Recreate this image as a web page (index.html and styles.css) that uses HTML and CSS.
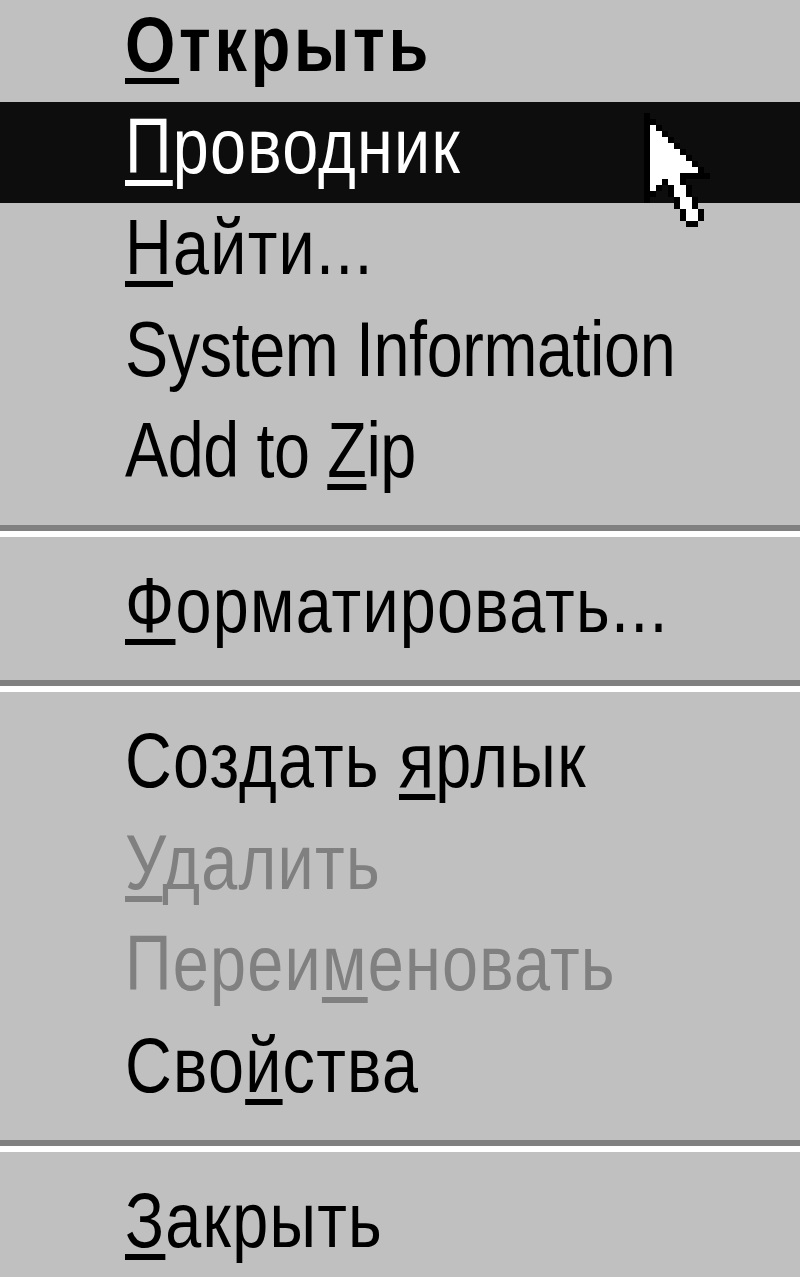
FILE: index.html
```html
<!DOCTYPE html>
<html lang="ru">
<head>
  <meta charset="UTF-8" />
  <meta name="viewport" content="width=device-width, initial-scale=1.0"/>
  <title>Контекстное меню</title>
<link rel="stylesheet" href="styles.css">
</head>
<body>
  <div class="menu">
    <div class="item default"><span class="label"><u>О</u>ткрыть</span></div>
    <div class="item selected"><span class="label"><u>П</u>роводник</span></div>
    <div class="item"><span class="label"><u>Н</u>айти...</span></div>
    <div class="item"><span class="label" lang="en">System Information</span></div>
    <div class="item"><span class="label" lang="en">Add to <u>Z</u>ip</span></div>
    <div class="separator"></div>
    <div class="item"><span class="label"><u>Ф</u>орматировать...</span></div>
    <div class="separator"></div>
    <div class="item"><span class="label">Создать <u>я</u>рлык</span></div>
    <div class="item disabled"><span class="label"><u>У</u>далить</span></div>
    <div class="item disabled"><span class="label">Переи<u>м</u>еновать</span></div>
    <div class="item"><span class="label">Сво<u>й</u>ства</span></div>
    <div class="separator"></div>
    <div class="item"><span class="label"><u>З</u>акрыть</span></div>

    <!-- mouse pointer, 11x19 pixels drawn at 6x -->
    <svg class="cursor" viewBox="0 0 11 19" width="66" height="114" shape-rendering="crispEdges">
      <path fill="#000" d="M0 0h1v15h-1z M1 1h1v1h-1z M2 2h1v1h-1z M3 3h1v1h-1z M4 4h1v1h-1z M5 5h1v1h-1z M6 6h1v1h-1z M7 7h1v1h-1z M8 8h1v1h-1z M9 9h1v1h-1z M6 10h5v1h-5z M3 11h1v1h-1z M6 11h1v1h-1z M2 12h1v1h-1z M4 12h1v2h-1z M7 12h1v2h-1z M1 13h1v1h-1z M5 14h1v2h-1z M8 14h1v2h-1z M6 16h1v2h-1z M9 16h1v2h-1z M7 18h2v1h-2z"/>
      <path fill="#fff" d="M1 2h1v1h-1z M1 3h2v1h-2z M1 4h3v1h-3z M1 5h4v1h-4z M1 6h5v1h-5z M1 7h6v1h-6z M1 8h7v1h-7z M1 9h8v1h-8z M1 10h5v1h-5z M1 11h2v1h-2z M4 11h2v1h-2z M1 12h1v1h-1z M5 12h2v2h-2z M6 14h2v2h-2z M7 16h2v2h-2z"/>
    </svg>
  </div>
</body>
</html>
```

FILE: styles.css
```css
body {
  margin: 0;
  padding: 0;
  background: #c0c0c0;
  font-family: "Liberation Sans", Arial, sans-serif;
}
.menu {
  position: relative;
  width: 800px;
  height: 1277px;
  overflow: hidden;
  background: #c0c0c0;
}
.item {
  box-sizing: border-box;
  height: 101.5px;
  padding-left: 125px;
  font-size: 78px;
  line-height: 88px;
  letter-spacing: 1.5px;
  color: #000;
  white-space: nowrap;
}
.label {
  display: inline-block;
  transform: scaleX(0.83);
  transform-origin: 0 0;
}
.label[lang="en"] {
  letter-spacing: -0.5px;
}
.item u {
  text-decoration-thickness: 6px;
  text-underline-offset: 7px;
}
.default {
  font-weight: bold;
  letter-spacing: 4.5px;
}
.selected {
  background: #0d0d0d;
  color: #fff;
}
.disabled {
  color: #808080;
}
.separator {
  box-sizing: border-box;
  height: 53.5px;
  padding-top: 17.5px;
}
.separator::before {
  content: "";
  display: block;
  height: 6px;
  background: #808080;
  border-bottom: 6px solid #fff;
}
.cursor {
  position: absolute;
  left: 644px;
  top: 113px;
}
```
